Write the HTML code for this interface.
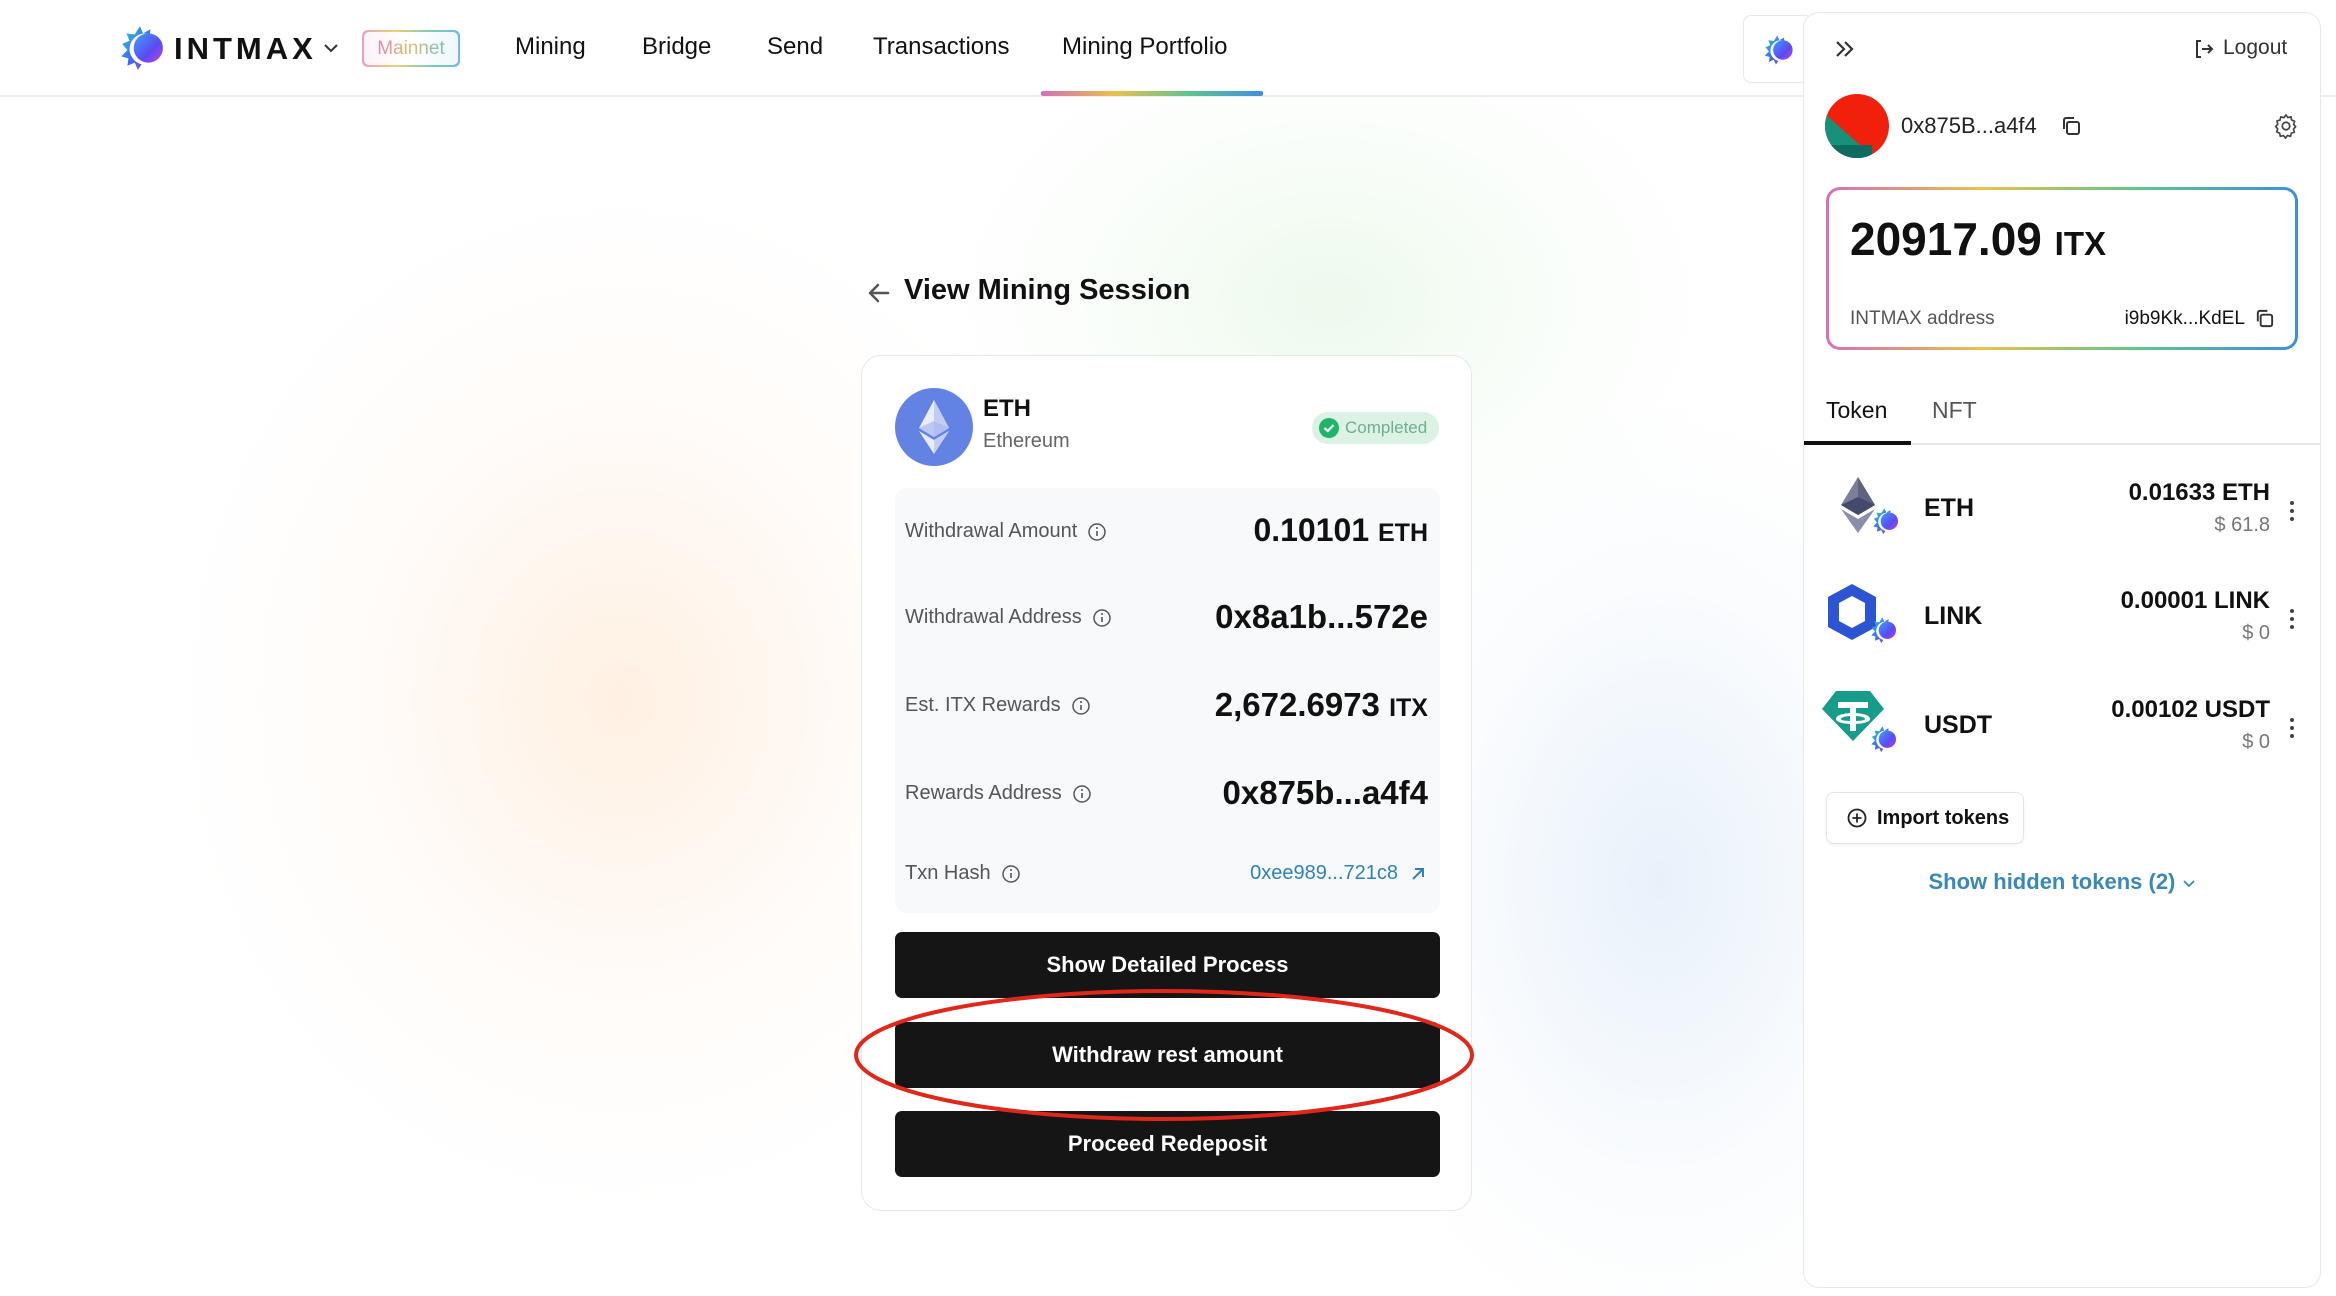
<!DOCTYPE html>
<html><head><meta charset="utf-8">
<style>
*{box-sizing:border-box;margin:0;padding:0}
body{width:2336px;height:1296px;overflow:hidden;background:#fff;font-family:"Liberation Sans",sans-serif;color:#111;position:relative}
.bg{position:absolute;inset:0;background:
radial-gradient(ellipse 560px 640px at 620px 700px,rgba(255,205,160,.30),rgba(255,225,200,.12) 45%,rgba(255,255,255,0) 80%),
radial-gradient(ellipse 520px 380px at 1330px 300px,rgba(200,238,200,.32),rgba(220,245,220,.1) 50%,rgba(255,255,255,0) 80%),
radial-gradient(ellipse 420px 600px at 1660px 880px,rgba(195,218,242,.38),rgba(215,230,248,.12) 50%,rgba(255,255,255,0) 80%);}
.abs{position:absolute}
.hdr{position:absolute;left:0;top:0;width:2336px;height:97px;background:#fff;border-bottom:2px solid #eeeeef}
.nav{position:absolute;top:33px;font-size:24px;color:#111}
.card{position:absolute;left:861px;top:355px;width:611px;height:856px;background:#fff;border:1.5px solid #e6e8ea;border-radius:20px}
.det{position:absolute;left:33px;top:132px;width:545px;height:425px;background:#f7f9fb;border-radius:12px}
.lbl{position:absolute;left:10px;font-size:20px;color:#555;display:flex;align-items:center;gap:10px}
.val{position:absolute;right:12px;font-size:33px;font-weight:bold;color:#111}
.val small{font-size:25px}
.btn{position:absolute;left:33px;width:545px;height:66px;background:#151515;border-radius:7px;color:#fff;font-size:22px;font-weight:bold;display:flex;align-items:center;justify-content:center}
.panel{position:absolute;left:1803px;top:12px;width:518px;height:1276px;background:#fff;border:1.5px solid #e6e8ea;border-radius:16px}
.tok{position:absolute;left:0;width:518px;height:100px}
.tname{position:absolute;left:120px;font-size:25px;font-weight:bold}
.tamt{position:absolute;right:52px;font-size:24px;font-weight:bold;text-align:right}
.tusd{position:absolute;right:52px;font-size:20px;color:#777}
.dots{position:absolute;right:28px;width:4px}
.dots i{display:block;width:4px;height:4px;border-radius:2px;background:#444;margin-bottom:4px}
</style></head><body>
<svg width="0" height="0" style="position:absolute">
<defs>
<linearGradient id="lg1" x1="0" y1="0" x2="1" y2="1"><stop offset="0" stop-color="#2ad6d0"/><stop offset=".5" stop-color="#3b6cf0"/><stop offset="1" stop-color="#a13ff0"/></linearGradient>
<linearGradient id="lg2" x1="0" y1="0" x2="1" y2="1"><stop offset="0" stop-color="#3fa0ff"/><stop offset=".6" stop-color="#5a4af2"/><stop offset="1" stop-color="#c23ee8"/></linearGradient>
<g id="logo">
<path d="M20 2 L23 9 L30 5 L29 13 L36 13 L31 19 L34 24 L22 38 L18 44 L15 37 L8 40 L9 33 L2 31 L8 25 L3 19 L10 16 L7 9 L15 10 Z" fill="url(#lg1)"/>
<circle cx="25" cy="24" r="15" fill="#fff"/>
<circle cx="28" cy="23" r="14" fill="url(#lg2)"/>
</g>
</defs></svg>
<div class="bg"></div>

<div class="hdr">
  <svg class="abs" style="left:116px;top:24px" width="50" height="48" viewBox="0 0 42 46"><use href="#logo"/></svg>
  <div class="abs" style="left:174px;top:31px;font-size:31px;letter-spacing:4px;font-weight:bold;color:#111">INTMAX</div>
  <svg class="abs" style="left:323px;top:42px" width="16" height="12" viewBox="0 0 16 12"><path d="M2 3 L8 9 L14 3" fill="none" stroke="#333" stroke-width="2"/></svg>
  <div class="abs" style="left:362px;top:30px;width:98px;height:37px;border-radius:6px;padding:2px;background:linear-gradient(90deg,#e8a0c8,#f0d070,#80d0a8,#70b8e8)">
    <div style="width:100%;height:100%;background:linear-gradient(90deg,#fdf3f8,#fff,#eef8fb);border-radius:5px;font-size:19px;text-align:center;line-height:33px;color:#d9a0b8"><span style="background:linear-gradient(90deg,#d58ab0,#d8c070,#70c0c8);-webkit-background-clip:text;color:transparent">Mainnet</span></div>
  </div>
  <div class="nav" style="left:515px">Mining</div>
  <div class="nav" style="left:642px">Bridge</div>
  <div class="nav" style="left:767px">Send</div>
  <div class="nav" style="left:873px">Transactions</div>
  <div class="nav" style="left:1062px">Mining Portfolio</div>
  <div class="abs" style="left:1041px;top:91px;width:222px;height:5px;border-radius:2px;background:linear-gradient(90deg,#d46fb8,#e8c24a,#5fc38f,#3d8fe0)"></div>
  <div class="abs" style="left:1743px;top:15px;width:70px;height:68px;border:1.5px solid #e6e8ea;border-radius:8px;background:#fff"></div>
  <svg class="abs" style="left:1762px;top:34px" width="32" height="32" viewBox="0 0 42 46"><use href="#logo"/></svg>
</div>

<svg class="abs" style="left:866px;top:280px" width="26" height="26" viewBox="0 0 26 26"><path d="M22 13 H4 M12 5 L4 13 L12 21" fill="none" stroke="#555" stroke-width="2.5" stroke-linecap="round" stroke-linejoin="round"/></svg>
<div class="abs" style="left:904px;top:274px;font-size:29px;font-weight:bold">View Mining Session</div>

<div class="card">
  <svg class="abs" style="left:33px;top:32px" width="78" height="78" viewBox="0 0 78 78">
    <circle cx="39" cy="39" r="39" fill="#6283e4"/>
    <path d="M39 12 L24 40 L39 49 L54 40 Z" fill="#e8ecfb"/>
    <path d="M39 12 L39 49 L54 40 Z" fill="#c3cdf3"/>
    <path d="M24 43 L39 66 L54 43 L39 52 Z" fill="#e8ecfb"/>
    <path d="M39 52 L39 66 L54 43 Z" fill="#c3cdf3"/>
    <path d="M24 40 L39 33 L54 40 L39 49 Z" fill="#aab8ee" opacity=".7"/>
  </svg>
  <div class="abs" style="left:121px;top:39px;font-size:24px;font-weight:bold">ETH</div>
  <div class="abs" style="left:121px;top:74px;font-size:20px;color:#666">Ethereum</div>
  <div class="abs" style="left:450px;top:56px;width:127px;height:32px;border-radius:16px;background:#dcf2e5;display:flex;align-items:center;padding-left:7px;gap:6px;font-size:17px;color:#6db08a">
    <svg width="20" height="20" viewBox="0 0 20 20"><circle cx="10" cy="10" r="10" fill="#1fb46a"/><path d="M5.5 10 L8.8 13 L14.5 7" fill="none" stroke="#fff" stroke-width="2.2"/></svg>Completed</div>
  <div class="det">
    <div class="lbl" style="top:32px">Withdrawal Amount <svg width="20" height="20" viewBox="0 0 20 20"><circle cx="10" cy="10" r="8" fill="none" stroke="#555" stroke-width="1.5"/><path d="M10 9v5" stroke="#555" stroke-width="1.6"/><circle cx="10" cy="6" r="1" fill="#555"/></svg></div>
    <div class="val" style="top:24px;font-size:32px">0.10101 <small>ETH</small></div>
    <div class="lbl" style="top:118px">Withdrawal Address <svg width="20" height="20" viewBox="0 0 20 20"><circle cx="10" cy="10" r="8" fill="none" stroke="#555" stroke-width="1.5"/><path d="M10 9v5" stroke="#555" stroke-width="1.6"/><circle cx="10" cy="6" r="1" fill="#555"/></svg></div>
    <div class="val" style="top:110px">0x8a1b...572e</div>
    <div class="lbl" style="top:206px">Est. ITX Rewards <svg width="20" height="20" viewBox="0 0 20 20"><circle cx="10" cy="10" r="8" fill="none" stroke="#555" stroke-width="1.5"/><path d="M10 9v5" stroke="#555" stroke-width="1.6"/><circle cx="10" cy="6" r="1" fill="#555"/></svg></div>
    <div class="val" style="top:198px">2,672.6973 <small>ITX</small></div>
    <div class="lbl" style="top:294px">Rewards Address <svg width="20" height="20" viewBox="0 0 20 20"><circle cx="10" cy="10" r="8" fill="none" stroke="#555" stroke-width="1.5"/><path d="M10 9v5" stroke="#555" stroke-width="1.6"/><circle cx="10" cy="6" r="1" fill="#555"/></svg></div>
    <div class="val" style="top:286px">0x875b...a4f4</div>
    <div class="lbl" style="top:374px">Txn Hash <svg width="20" height="20" viewBox="0 0 20 20"><circle cx="10" cy="10" r="8" fill="none" stroke="#555" stroke-width="1.5"/><path d="M10 9v5" stroke="#555" stroke-width="1.6"/><circle cx="10" cy="6" r="1" fill="#555"/></svg></div>
    <div class="abs" style="right:14px;top:374px;font-size:20px;color:#2f82b8;display:flex;align-items:center;gap:12px">0xee989...721c8 <svg width="16" height="16" viewBox="0 0 16 16"><path d="M3 13 L13 3 M5 3 H13 V11" fill="none" stroke="#2f82b8" stroke-width="2"/></svg></div>
  </div>
  <div class="btn" style="top:576px">Show Detailed Process</div>
  <div class="btn" style="top:666px">Withdraw rest amount</div>
  <div class="btn" style="top:755px">Proceed Redeposit</div>
</div>
<svg class="abs" style="left:850px;top:985px" width="630" height="140" viewBox="0 0 630 140"><ellipse cx="314" cy="70" rx="308" ry="64" fill="none" stroke="#e0281a" stroke-width="4"/></svg>

<div class="panel">
  <svg class="abs" style="left:30px;top:26px" width="22" height="20" viewBox="0 0 22 20"><path d="M3 3 L10 10 L3 17 M11 3 L18 10 L11 17" fill="none" stroke="#333" stroke-width="2.2"/></svg>
  <svg class="abs" style="left:389px;top:25px" width="22" height="22" viewBox="0 0 22 22"><path d="M8 3 H4 V19 H8 M9 11 H19 M15 7 L19 11 L15 15" fill="none" stroke="#333" stroke-width="2"/></svg>
  <div class="abs" style="left:419px;top:23px;font-size:21px;color:#333">Logout</div>
  <svg class="abs" style="left:20px;top:80px" width="66" height="66" viewBox="0 0 66 66"><defs><clipPath id="av"><circle cx="33" cy="33" r="32"/></clipPath></defs><g clip-path="url(#av)"><rect width="66" height="66" fill="#f0200c"/><path d="M0 20 L36 52 L48 52 L48 66 L0 66 Z" fill="#17917a"/><path d="M0 52 L48 52 L48 66 L0 66Z" fill="#0f6b60"/></g></svg>
  <div class="abs" style="left:97px;top:100px;font-size:22px;color:#222">0x875B...a4f4</div>
  <svg class="abs" style="left:256px;top:102px" width="22" height="22" viewBox="0 0 22 22"><rect x="7" y="7" width="12" height="12" rx="2" fill="none" stroke="#333" stroke-width="2"/><path d="M4 14 V5 A2 2 0 0 1 6 3 H14" fill="none" stroke="#333" stroke-width="2"/></svg>
  <svg class="abs" style="left:468px;top:99px" width="28" height="28" viewBox="0 0 24 24"><path d="M12 2.5 l1.6 2.3 2.7-.7.5 2.8 2.6 1-.9 2.6 1.8 2.1-1.9 2 .8 2.7-2.7.9-.6 2.7-2.7-.8-1.6 2.3-1.8-2.2-2.7.7-.5-2.8-2.6-1 .9-2.6-1.8-2.1 1.9-2-.8-2.7 2.7-.9.6-2.7 2.7.8z" fill="none" stroke="#444" stroke-width="1.4" stroke-linejoin="round"/><circle cx="12" cy="12" r="3.2" fill="none" stroke="#444" stroke-width="1.5"/></svg>
  <div class="abs" style="left:22px;top:174px;width:472px;height:163px;border-radius:14px;padding:3px;background:linear-gradient(90deg,#d46fb8,#e8c24a,#5fc38f,#3d8fe0)">
    <div style="position:relative;width:100%;height:100%;background:#fff;border-radius:11px">
      <div class="abs" style="left:21px;top:22px;font-size:46px;font-weight:bold">20917.09 <span style="font-size:33px">ITX</span></div>
      <div class="abs" style="left:21px;top:118px;font-size:19px;color:#555">INTMAX address</div>
      <div class="abs" style="right:50px;top:118px;font-size:19px;color:#111">i9b9Kk...KdEL</div>
      <svg class="abs" style="right:20px;top:118px" width="21" height="21" viewBox="0 0 22 22"><rect x="7" y="7" width="12" height="12" rx="2" fill="none" stroke="#333" stroke-width="2"/><path d="M4 14 V5 A2 2 0 0 1 6 3 H14" fill="none" stroke="#333" stroke-width="2"/></svg>
    </div>
  </div>
  <div class="abs" style="left:22px;top:384px;font-size:23px">Token</div>
  <div class="abs" style="left:128px;top:384px;font-size:23px;color:#555">NFT</div>
  <div class="abs" style="left:0;top:430px;width:516px;height:1.5px;background:#e8e8e8"></div>
  <div class="abs" style="left:0;top:428px;width:107px;height:4px;background:#111"></div>

  <div class="tok" style="top:432px">
    <svg class="abs" style="left:22px;top:32px" width="76" height="60" viewBox="0 0 76 60">
      <path d="M32 0 L15 28 L32 38 L49 28Z" fill="#7c7f98"/><path d="M32 0 L32 38 L49 28Z" fill="#5f6280"/>
      <path d="M15 32 L32 56 L49 32 L32 42Z" fill="#8a8ea8"/><path d="M15 28 L32 20 L49 28 L32 38Z" fill="#464a6a"/>
      <use href="#logo" transform="translate(46 30) scale(.62)"/>
    </svg>
    <div class="tname" style="top:49px">ETH</div>
    <div class="tamt" style="top:34px">0.01633 ETH</div>
    <div class="tusd" style="top:69px">$ 61.8</div>
    <div class="dots" style="top:56px"><i></i><i></i><i></i></div>
  </div>
  <div class="tok" style="top:542px">
    <svg class="abs" style="left:20px;top:27px" width="80" height="70" viewBox="0 0 80 70">
      <path d="M28 2 L52 15 V45 L28 58 L4 45 V15Z" fill="#2d55d3"/><path d="M28 14 L41 21 V39 L28 46 L15 39 V21Z" fill="#fff"/>
      <use href="#logo" transform="translate(46 34) scale(.62)"/>
    </svg>
    <div class="tname" style="top:47px">LINK</div>
    <div class="tamt" style="top:32px">0.00001 LINK</div>
    <div class="tusd" style="top:67px">$ 0</div>
    <div class="dots" style="top:54px"><i></i><i></i><i></i></div>
  </div>
  <div class="tok" style="top:652px">
    <svg class="abs" style="left:18px;top:24px" width="82" height="70" viewBox="0 0 82 70">
      <path d="M14 2 H48 L62 20 L31 52 L0 20Z" fill="#179b8a"/>
      <path d="M16 13 H46 V19 H34 V24 C44 25 48 27 48 30 C48 33 41 35 31 35 C21 35 14 33 14 30 C14 27 18 25 28 24 V19 H16Z" fill="#fff"/>
      <path d="M28 27 V42 H34 V27 C41 27.5 43 29 43 30 C43 31.5 38 32 31 32 C24 32 19 31.5 19 30 C19 29 21 27.5 28 27Z" fill="#179b8a"/>
      <rect x="28" y="27" width="6" height="15" fill="#fff"/>
      <use href="#logo" transform="translate(48 36) scale(.62)"/>
    </svg>
    <div class="tname" style="top:46px">USDT</div>
    <div class="tamt" style="top:31px">0.00102 USDT</div>
    <div class="tusd" style="top:66px">$ 0</div>
    <div class="dots" style="top:53px"><i></i><i></i><i></i></div>
  </div>
  <div class="abs" style="left:22px;top:779px;width:198px;height:52px;border:1.5px solid #e2e4e6;border-radius:8px;box-shadow:0 1px 3px rgba(0,0,0,.06);display:flex;align-items:center;padding-left:20px;gap:10px;font-size:20px;font-weight:bold">
    <svg width="20" height="20" viewBox="0 0 20 20"><circle cx="10" cy="10" r="8.5" fill="none" stroke="#222" stroke-width="1.8"/><path d="M10 5.5 V14.5 M5.5 10 H14.5" stroke="#222" stroke-width="1.8"/></svg>Import tokens</div>
  <div class="abs" style="left:0;width:516px;top:856px;text-align:center;font-size:22px;font-weight:bold;color:#3a88b5">Show hidden tokens (2) <svg width="14" height="10" viewBox="0 0 14 10"><path d="M2 2 L7 7 L12 2" fill="none" stroke="#3a88b5" stroke-width="1.8"/></svg></div>
</div>
</body></html>
